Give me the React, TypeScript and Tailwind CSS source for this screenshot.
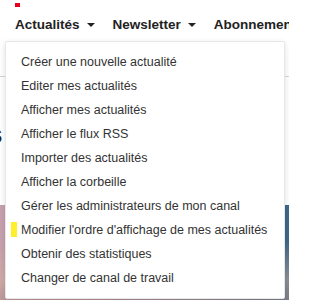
import { useState } from "react";

const menuItems = [
  "Créer une nouvelle actualité",
  "Editer mes actualités",
  "Afficher mes actualités",
  "Afficher le flux RSS",
  "Importer des actualités",
  "Afficher la corbeille",
  "Gérer les administrateurs de mon canal",
  "Modifier l'ordre d'affichage de mes actualités",
  "Obtenir des statistiques",
  "Changer de canal de travail",
];

const Caret = () => (
  <span className="ml-[7px] inline-block h-0 w-0 border-x-[4px] border-t-[4px] border-x-transparent border-t-[#222]" />
);

export default function App() {
  const [highlighted] = useState(7);

  return (
    <div className="relative h-[300px] w-[289px] overflow-hidden bg-white font-['Liberation_Sans',Arial,sans-serif]">
      <div className="ml-[15px] mt-[3px] h-[4px] w-[5px] bg-[#e2001a]" />

      <nav className="flex items-center gap-[18px] whitespace-nowrap pl-[15px] pt-[8px] text-[13.5px] font-bold text-[#222]">
        <span className="flex items-center">
          Actualités
          <Caret />
        </span>
        <span className="flex items-center">
          Newsletter
          <Caret />
        </span>
        <span>Abonnements</span>
      </nav>

      <div className="mt-[41px] border-t border-gray-300" />

      <div className="mt-[44px] w-[5px] overflow-hidden">
        <h1 className="ml-[-12px] whitespace-nowrap text-[26px] font-bold leading-none text-[#222]">
          s
        </h1>
      </div>

      <div className="absolute inset-x-0 bottom-0 top-[205px] bg-[linear-gradient(90deg,#c7a1ae_0%,#b98a9d_30%,#8c7f93_60%,#3f6788_100%)]">
        <div className="mt-[36px] h-full bg-[linear-gradient(180deg,rgba(0,0,0,0)_0%,rgba(214,180,160,0.5)_40%,rgba(120,90,90,0.5)_100%)]" />
      </div>

      <div className="absolute left-[5px] top-[41px] w-[280px] rounded-[2px] border border-gray-200 bg-white py-[8px] shadow-[0_2px_6px_rgba(0,0,0,0.12)]">
        {menuItems.map((item, i) => (
          <div
            key={item}
            className="relative flex h-[24px] items-center whitespace-nowrap pl-[15px] text-[12.5px] text-[#333]"
          >
            {i === highlighted && (
              <span className="absolute left-[5px] top-[4px] h-[15px] w-[6px] bg-[#ffef2a]" />
            )}
            {item}
          </div>
        ))}
      </div>
    </div>
  );
}
